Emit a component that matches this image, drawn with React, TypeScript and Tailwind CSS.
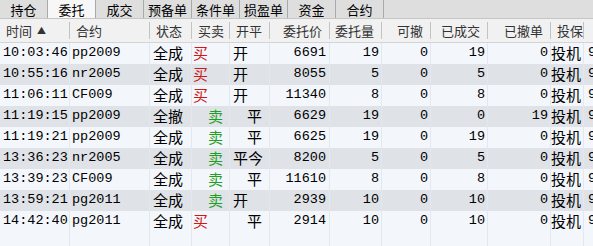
import React from "react";

const tabs = ["持仓", "委托", "成交", "预备单", "条件单", "损盈单", "资金", "合约"];

// column widths in px
const cols = [
  { key: "time", title: "时间", w: 70, align: "left" },
  { key: "code", title: "合约", w: 80, align: "left" },
  { key: "status", title: "状态", w: 42, align: "left" },
  { key: "side", title: "买卖", w: 38, align: "left" },
  { key: "oc", title: "开平", w: 40, align: "left" },
  { key: "price", title: "委托价", w: 60, align: "right" },
  { key: "qty", title: "委托量", w: 52, align: "right" },
  { key: "can", title: "可撤", w: 49, align: "right" },
  { key: "done", title: "已成交", w: 57, align: "right" },
  { key: "cancel", title: "已撤单", w: 63, align: "right" },
  { key: "hedge", title: "投保", w: 33, align: "left" },
];

type Row = {
  time: string;
  code: string;
  status: string;
  side: "买" | "卖";
  oc: string;
  ocPad: boolean;
  price: number;
  qty: number;
  can: number;
  done: number;
  cancel: number;
};

const rows: Row[] = [
  { time: "10:03:46", code: "pp2009", status: "全成", side: "买", oc: "开", ocPad: false, price: 6691, qty: 19, can: 0, done: 19, cancel: 0 },
  { time: "10:55:16", code: "nr2005", status: "全成", side: "买", oc: "开", ocPad: false, price: 8055, qty: 5, can: 0, done: 5, cancel: 0 },
  { time: "11:06:11", code: "CF009", status: "全成", side: "买", oc: "开", ocPad: false, price: 11340, qty: 8, can: 0, done: 8, cancel: 0 },
  { time: "11:19:15", code: "pp2009", status: "全撤", side: "卖", oc: "平", ocPad: true, price: 6629, qty: 19, can: 0, done: 0, cancel: 19 },
  { time: "11:19:21", code: "pp2009", status: "全成", side: "卖", oc: "平", ocPad: true, price: 6625, qty: 19, can: 0, done: 19, cancel: 0 },
  { time: "13:36:23", code: "nr2005", status: "全成", side: "卖", oc: "平今", ocPad: false, price: 8200, qty: 5, can: 0, done: 5, cancel: 0 },
  { time: "13:39:23", code: "CF009", status: "全成", side: "卖", oc: "平", ocPad: true, price: 11610, qty: 8, can: 0, done: 8, cancel: 0 },
  { time: "13:59:21", code: "pg2011", status: "全成", side: "卖", oc: "开", ocPad: false, price: 2939, qty: 10, can: 0, done: 10, cancel: 0 },
  { time: "14:42:40", code: "pg2011", status: "全成", side: "买", oc: "平", ocPad: true, price: 2914, qty: 10, can: 0, done: 10, cancel: 0 },
];

const mono = "font-['Liberation_Mono','Noto_Sans_CJK_SC',monospace] text-[13.5px]";
const cjk = "font-['Noto_Sans_CJK_SC',sans-serif] text-[15px]";

function Cell({ w, children, className = "" }: { w: number; children?: React.ReactNode; className?: string }) {
  return (
    <div
      className={"h-full shrink-0 flex items-center whitespace-nowrap overflow-visible border-r border-[#e3e8ef] " + className}
      style={{ width: w }}
    >
      {children}
    </div>
  );
}

export default function App() {
  return (
    <div className="w-[593px] h-[246px] overflow-hidden bg-[#f3f6fb] text-black font-['Noto_Sans_CJK_SC',sans-serif]">
      {/* tab bar */}
      <div className="h-[19px] flex bg-[#dedede] border-b border-[#c6c6c6]">
        {tabs.map((t, i) => (
          <div
            key={t}
            className={
              "h-full w-[48px] flex items-center justify-center text-[13px] leading-none border-r border-[#a9a9a9] " +
              (i === 1 ? "bg-[#f7f7f7] -mb-px h-[19px]" : "")
            }
          >
            {t}
          </div>
        ))}
      </div>

      {/* header */}
      <div className="h-[24px] flex bg-[#f1f1f1] border-b border-[#d4d4d4] text-[13px] text-[#333]">
        {cols.map((c) => (
          <div key={c.key} className="h-full shrink-0 flex items-center relative" style={{ width: c.w }}>
            <div
              className={
                "flex-1 flex items-center " +
                (c.align === "right" ? "justify-end pr-[8px]" : "pl-[6px]")
              }
            >
              {c.title}
              {c.key === "time" && <span className="ml-[5px] text-[9px]">▲</span>}
            </div>
            <div className="absolute right-0 top-[3px] bottom-[3px] w-px bg-[#c3c3c3]" />
          </div>
        ))}
        <div className="flex-1" />
      </div>

      {/* body */}
      {rows.map((r, i) => (
        <div key={i} className={"h-[21px] flex " + (i % 2 === 1 ? "bg-[#dfe2e7]" : "bg-[#f3f6fb]")}>
          <Cell w={70} className={mono + " pl-[3px]"}>{r.time}</Cell>
          <Cell w={80} className={mono + " pl-[2px]"}>{r.code}</Cell>
          <Cell w={42} className={cjk + " pl-[3px]"}>{r.status}</Cell>
          <Cell w={38} className={cjk + (r.side === "买" ? " pl-[1px] text-[#d01818]" : " pl-[16px] text-[#1fa01f]")}>
            {r.side}
          </Cell>
          <Cell w={40} className={cjk + (r.ocPad ? " pl-[17px]" : " pl-[3px]")}>{r.oc}</Cell>
          <Cell w={60} className={mono + " justify-end pr-[3px]"}>{r.price}</Cell>
          <Cell w={52} className={mono + " justify-end pr-[2px]"}>{r.qty}</Cell>
          <Cell w={49} className={mono + " justify-end pr-[2px]"}>{r.can}</Cell>
          <Cell w={57} className={mono + " justify-end pr-[2px]"}>{r.done}</Cell>
          <Cell w={63} className={mono + " justify-end pr-[2px]"}>{r.cancel}</Cell>
          <Cell w={33} className={cjk + " pl-[0px]"}>投机</Cell>
          <div className={"h-full flex-1 flex items-center pl-[4px] " + mono}>9</div>
        </div>
      ))}

      {/* empty filler row */}
      <div className="h-[20px] flex">
        {cols.map((c) => (
          <Cell key={c.key} w={c.w} />
        ))}
      </div>
    </div>
  );
}
